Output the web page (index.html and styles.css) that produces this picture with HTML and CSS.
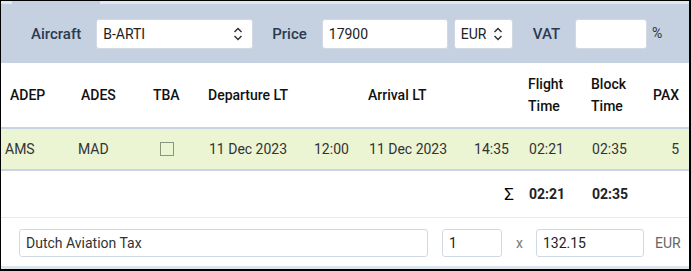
FILE: index.html
```html
<!DOCTYPE html>
<html>
<head>
  <meta charset="UTF-8">
  <title>Quote leg</title>
  <link rel="stylesheet" href="styles.css">
</head>
<body>
  <div class="frame">
    <div class="tab-edge"><span class="tab-gap"></span></div>
    <div class="toolbar">
      <label class="tool-label lbl-aircraft">Aircraft</label>
      <div class="select sel-aircraft">
        <span>B-ARTI</span>
        <svg class="chev" width="10" height="14" viewBox="0 0 10 14"><path d="M1.5 5 L5 1.5 L8.5 5 M1.5 9 L5 12.5 L8.5 9" fill="none" stroke="#333" stroke-width="1.5"/></svg>
      </div>
      <label class="tool-label lbl-price">Price</label>
      <div class="input in-price">17900</div>
      <div class="select sel-cur">
        <span>EUR</span>
        <svg class="chev" width="10" height="14" viewBox="0 0 10 14"><path d="M1.5 5 L5 1.5 L8.5 5 M1.5 9 L5 12.5 L8.5 9" fill="none" stroke="#333" stroke-width="1.5"/></svg>
      </div>
      <label class="tool-label lbl-vat">VAT</label>
      <div class="input in-vat"></div>
      <span class="pct">%</span>
    </div>

    <table class="legs">
      <colgroup>
        <col style="width:72px"><col style="width:73px"><col style="width:55px">
        <col style="width:105px"><col style="width:55px"><col style="width:105px">
        <col style="width:55px"><col style="width:63px"><col style="width:62px">
        <col>
      </colgroup>
      <thead>
        <tr>
          <th class="c-adep">ADEP</th>
          <th class="c-ades">ADES</th>
          <th class="c-tba">TBA</th>
          <th colspan="2" class="c-dep">Departure LT</th>
          <th colspan="2" class="c-dep">Arrival LT</th>
          <th>Flight<br>Time</th>
          <th>Block<br>Time</th>
          <th>PAX</th>
        </tr>
      </thead>
      <tbody>
        <tr class="leg">
          <td class="c-adep-d">AMS</td>
          <td class="c-ades-d">MAD</td>
          <td class="c-tba-d"><span class="box"></span></td>
          <td>11 Dec 2023</td>
          <td>12:00</td>
          <td>11 Dec 2023</td>
          <td>14:35</td>
          <td>02:21</td>
          <td>02:35</td>
          <td class="num">5</td>
        </tr>
        <tr class="sum">
          <td colspan="7" class="sigma">&Sigma;</td>
          <td>02:21</td>
          <td>02:35</td>
          <td></td>
        </tr>
      </tbody>
    </table>

    <div class="fees">
      <div class="input in-name">Dutch Aviation Tax</div>
      <div class="input in-qty">1</div>
      <span class="times">x</span>
      <div class="input in-amount">132.15</div>
      <span class="cur">EUR</span>
    </div>
    <div class="bottom-edge"></div>
  </div>
</body>
</html>
```

FILE: styles.css
```css
body {
  margin: 0;
  font-family: Roboto, 'Liberation Sans', sans-serif;
  font-size: 14px;
  color: #333;
}
.frame {
  width: 691px;
  height: 271px;
  box-sizing: border-box;
  border-top: 1px solid #000;
  border-left: 1px solid #000;
  border-right: 2px solid #000;
  border-bottom: 2px solid #000;
  background: #fff;
  overflow: hidden;
}
.tab-edge {
  height: 3px;
  background: #e0e8f1;
}
.tab-gap {
  display: block;
  margin-left: 11px;
  width: 88px;
  height: 3px;
  background: #c5d1e1;
}
.toolbar {
  height: 59px;
  background: #c5d1e1;
  display: flex;
  align-items: flex-start;
  padding-top: 15px;
  box-sizing: border-box;
}
.tool-label {
  font-size: 15px;
  font-weight: 500;
  color: #2b3a4f;
  line-height: 30px;
}
.lbl-aircraft { margin-left: 30px; }
.lbl-price { margin-left: 19px; }
.lbl-vat { margin-left: 20px; }
.select, .input {
  box-sizing: border-box;
  height: 30px;
  background: #fff;
  border: 1px solid #d3d9e2;
  border-radius: 3px;
  padding: 0 6px;
  line-height: 28px;
  font-size: 14px;
  color: #222;
}
.select {
  display: flex;
  align-items: center;
  justify-content: space-between;
}
.sel-aircraft { width: 157px; margin-left: 15px; }
.chev { margin-right: 3px; }
.in-price { width: 126px; margin-left: 15px; }
.sel-cur { width: 59px; margin-left: 6px; }
.in-vat { width: 72px; margin-left: 15px; }
.pct {
  margin-left: 5px;
  line-height: 28px;
  color: #333;
}
.legs {
  width: 688px;
  border-collapse: collapse;
  table-layout: fixed;
}
.legs th {
  height: 64px;
  text-align: left;
  font-weight: 500;
  color: #111;
  padding: 0 0 0 7px;
  line-height: 22px;
  font-size: 14px;
}
.legs th.c-adep { padding-left: 9px; }
.legs th.c-ades { padding-left: 8px; }
.legs th.c-tba { padding-left: 7px; }
.legs td {
  padding: 0 0 0 8px;
  color: #333;
}
.leg td {
  height: 40px;
  background: #ebf4d3;
  border-top: 2px solid #c9d3e4;
  border-bottom: 2px solid #c9d3e4;
}
.leg td.c-adep-d { padding-left: 4px; }
.leg td.c-ades-d { padding-left: 5px; }
.leg td.c-tba-d { padding-left: 14px; }
.leg td.num {
  text-align: right;
  padding-right: 10px;
}
.box {
  display: block;
  width: 12px;
  height: 12px;
  border: 1px solid #8a957d;
}
.sum td {
  height: 46px;
  font-weight: 700;
  color: #222;
  border-bottom: 1px solid #e6eaf0;
}
.sum td.sigma {
  text-align: right;
  padding-right: 7px;
  font-size: 17px;
  font-weight: 400;
  color: #000;
}
.fees {
  display: flex;
  align-items: center;
  box-sizing: border-box;
  height: 48px;
  padding: 2px 0 0 18px;
}
.fees .input {
  height: 28px;
  line-height: 26px;
}
.in-name { width: 409px; color: #333; }
.in-qty { width: 60px; margin-left: 14px; }
.times { margin-left: 14px; color: #777; }
.in-amount { width: 108px; margin-left: 13px; }
.cur { margin-left: 11px; color: #666; }
.bottom-edge {
  height: 3px;
  background: #dee4ec;
}
```
